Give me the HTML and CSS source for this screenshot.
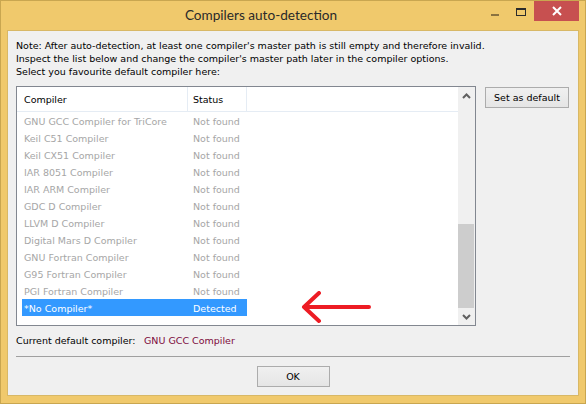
FILE: index.html
```html
<!DOCTYPE html>
<html>
<head>
<meta charset="utf-8">
<link rel="stylesheet" href="styles.css">
</head>
<body>
<div class="window">
  <div class="titlebar">
    <div class="title">Compilers auto-detection</div>
    <div class="controls">
      <div class="ctl min"><span class="min-bar"></span></div>
      <div class="ctl max"><span class="max-box"></span></div>
      <div class="ctl close">
        <svg width="10" height="10" viewBox="0 0 10 10"><path d="M1 1 L9 9 M9 1 L1 9" stroke="#fff" stroke-width="2" fill="none"/></svg>
      </div>
    </div>
  </div>
  <div class="client">
    <div class="note">
      <div>Note: After auto-detection, at least one compiler's master path is still empty and therefore invalid.</div>
      <div>Inspect the list below and change the compiler's master path later in the compiler options.</div>
      <div>Select you favourite default compiler here:</div>
    </div>
    <div class="main-row">
      <div class="listbox">
        <div class="list-area">
          <div class="header">
            <div class="hcol c1">Compiler</div>
            <div class="hcol c2">Status</div>
            <div class="hcol c3"></div>
          </div>
          <div class="rows">
            <div class="row"><span class="cell n">GNU GCC Compiler for TriCore</span><span class="cell s">Not found</span></div>
            <div class="row"><span class="cell n">Keil C51 Compiler</span><span class="cell s">Not found</span></div>
            <div class="row"><span class="cell n">Keil CX51 Compiler</span><span class="cell s">Not found</span></div>
            <div class="row"><span class="cell n">IAR 8051 Compiler</span><span class="cell s">Not found</span></div>
            <div class="row"><span class="cell n">IAR ARM Compiler</span><span class="cell s">Not found</span></div>
            <div class="row"><span class="cell n">GDC D Compiler</span><span class="cell s">Not found</span></div>
            <div class="row"><span class="cell n">LLVM D Compiler</span><span class="cell s">Not found</span></div>
            <div class="row"><span class="cell n">Digital Mars D Compiler</span><span class="cell s">Not found</span></div>
            <div class="row"><span class="cell n">GNU Fortran Compiler</span><span class="cell s">Not found</span></div>
            <div class="row"><span class="cell n">G95 Fortran Compiler</span><span class="cell s">Not found</span></div>
            <div class="row"><span class="cell n">PGI Fortran Compiler</span><span class="cell s">Not found</span></div>
            <div class="row selected"><span class="cell n">*No Compiler*</span><span class="cell s">Detected</span></div>
          </div>
          <svg class="arrow" width="80" height="40" viewBox="0 0 80 40"><path d="M4 16 L69 16 M4 16 L19 2 M4 16 L19 30" stroke="#ed1c24" stroke-width="4" stroke-linecap="round" stroke-linejoin="round" fill="none"/></svg>
        </div>
        <div class="scrollbar">
          <div class="sb-btn">
            <svg width="9" height="6" viewBox="0 0 9 6"><path d="M1 5 L4.5 1.5 L8 5" stroke="#606060" stroke-width="2" fill="none"/></svg>
          </div>
          <div class="sb-track"><div class="sb-thumb"></div></div>
          <div class="sb-btn">
            <svg width="9" height="6" viewBox="0 0 9 6"><path d="M1 1 L4.5 4.5 L8 1" stroke="#606060" stroke-width="2" fill="none"/></svg>
          </div>
        </div>
      </div>
      <div class="side">
        <div class="btn default-btn">Set as default</div>
      </div>
    </div>
    <div class="current"><span class="cur-label">Current default compiler:</span><span class="cur-value">GNU GCC Compiler</span></div>
    <div class="sep"></div>
    <div class="bottom">
      <div class="btn ok-btn">OK</div>
    </div>
  </div>
</div>
</body>
</html>
```

FILE: styles.css
```css
* { box-sizing: border-box; }
html, body { margin: 0; padding: 0; }
body {
  width: 586px;
  height: 404px;
  overflow: hidden;
  font-family: "DejaVu Sans", Verdana, sans-serif;
  font-size: 9.5px;
  color: #000;
}
.window {
  width: 586px;
  height: 404px;
  background: #f0c96c;
  border: 1px solid #c9a650;
  display: flex;
  flex-direction: column;
}
.titlebar {
  height: 29px;
  flex: none;
  position: relative;
  display: flex;
  align-items: center;
  justify-content: center;
  padding-right: 64px;
}
.title {
  font-family: Lato, "Open Sans", sans-serif;
  font-size: 13.6px;
  color: #2a2a2a;
  margin-top: -1px;
}
.controls {
  position: absolute;
  top: 0;
  right: 6px;
  display: flex;
  align-items: flex-start;
}
.ctl {
  height: 20px;
  display: flex;
  align-items: center;
  justify-content: center;
}
.min { width: 26px; }
.min-bar { width: 8px; height: 2px; background: #8a7240; margin-top: 8px; }
.max { width: 26px; }
.max-box { width: 10px; height: 8px; border: 1px solid #2b2b2b; border-top-width: 2px; margin-top: 2px; }
.close { width: 45px; background: #c75050; }
.client {
  flex: 1;
  margin: 0 6px 7px 6px;
  background: #f0f0f0;
  border: 1px solid #d8b866;
  padding: 8px 8px 8px 8px;
  display: flex;
  flex-direction: column;
}
.note { line-height: 13px; }
.main-row {
  margin-top: 8px;
  display: flex;
  gap: 9px;
}
.listbox {
  width: 460px;
  height: 240px;
  border: 1px solid #828790;
  background: #fff;
  display: flex;
}
.list-area {
  flex: 1;
  position: relative;
  overflow: hidden;
}
.header {
  height: 25px;
  display: flex;
  border-bottom: 1px solid #e5ecf4;
}
.hcol {
  display: flex;
  align-items: center;
  border-right: 1px solid #e5ecf4;
}
.hcol.c1 { width: 171px; padding-left: 7px; }
.hcol.c2 { width: 59px; padding-left: 5px; }
.hcol.c3 { width: 210px; border-right: none; }
.rows { padding-left: 5px; }
.row {
  height: 17px;
  width: 225px;
  display: flex;
  align-items: center;
  color: #a6a6a6;
  padding-top: 1px;
}
.row .n { width: 166px; padding-left: 2px; }
.row .s { width: 59px; padding-left: 5px; }
.row.selected { background: #3399ff; color: #fff; }
.arrow {
  position: absolute;
  left: 283px;
  top: 204px;
}
.scrollbar {
  width: 17px;
  background: #f0f0f0;
  display: flex;
  flex-direction: column;
}
.sb-btn {
  height: 17px;
  display: flex;
  align-items: center;
  justify-content: center;
}
.sb-track { flex: 1; display: flex; flex-direction: column; justify-content: flex-end; }
.sb-thumb { height: 84px; background: #cdcdcd; margin: 0 1px 0 0; }
.btn {
  border: 1px solid #acacac;
  background: linear-gradient(#f0f0f0, #e5e5e5);
  display: flex;
  align-items: center;
  justify-content: center;
  height: 21px;
}
.default-btn { width: 84px; margin-top: 1px; }
.current {
  margin-top: 8px;
  line-height: 13px;
  display: flex;
}
.cur-label { width: 128px; }
.cur-value { color: #7d0a3c; }
.sep {
  margin-top: 9px;
  height: 1px;
  background: #a0a0a0;
}
.bottom {
  margin-top: 9px;
  display: flex;
  justify-content: center;
}
.ok-btn { width: 73px; }
```
